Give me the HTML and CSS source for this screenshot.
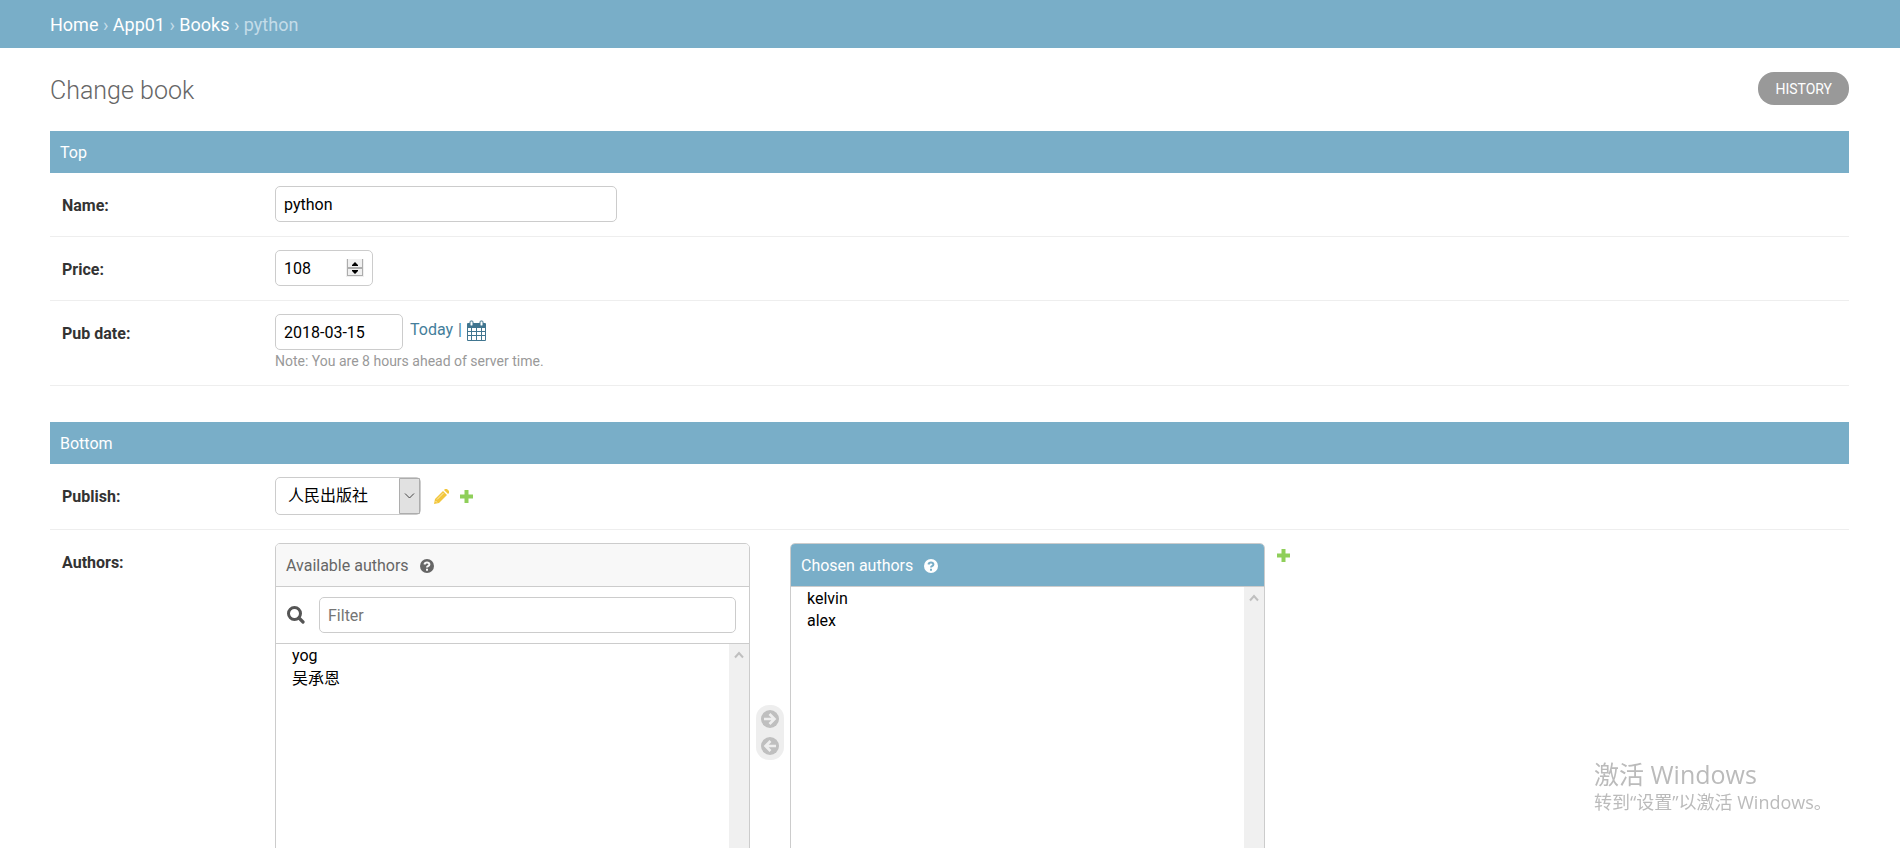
FILE: index.html
```html
<!DOCTYPE html>
<html lang="en">
<head>
<meta charset="utf-8">
<title>Change book</title>
<link rel="stylesheet" href="styles.css">
</head>
<body>
<nav class="breadcrumbs" aria-label="Breadcrumbs">
  <a href="#">Home</a> › <a href="#">App01</a> › <a href="#">Books</a> › python
</nav>
<main class="content">
  <div class="title-row">
    <h1 class="title">Change book</h1>
    <a class="history" href="#">HISTORY</a>
  </div>
  <form>
    <section class="module">
      <h2 class="module-title">Top</h2>
      <div class="row">
        <label class="row-label" for="name">Name:</label>
        <input class="field field-name" id="name" type="text" value="python">
      </div>
      <div class="row">
        <label class="row-label" for="price">Price:</label>
        <div class="number-wrap">
          <input class="field field-price" id="price" type="number" value="108">
          <svg class="spinner" viewBox="0 0 18 18" aria-hidden="true">
            <path fill="#f0f0f0" d="M0 0h18v18H0z"/>
            <path fill="#adadad" d="M1 0h1v17H1zM16 0h1v17h-1zM1 8h16v2H1zM1 16h16v1H1z"/>
            <path d="M9 3l3 3v1H6V6zM6 11h6v1l-3 3-3-3z"/>
          </svg>
        </div>
      </div>
      <div class="row">
        <label class="row-label" for="pub-date">Pub date:</label>
        <div>
          <div class="date-line">
            <input class="field field-date" id="pub-date" type="text" value="2018-03-15">
            <span class="shortcuts"><a href="#">Today</a><span>|</span>
              <a href="#" class="icon-link" aria-label="Choose a date">
                <svg class="calendar" viewBox="0 0 19 21" aria-hidden="true">
                  <path fill="#417690" d="M1 3h17q1 0 1 1v16q0 1-1 1H1q-1 0-1-1V4q0-1 1-1z"/>
                  <rect x="3" y="1" width="3" height="5" rx="1" fill="#fff" stroke="#417690"/>
                  <rect x="13" y="1" width="3" height="5" rx="1" fill="#fff" stroke="#417690"/>
                  <path fill="#fff" d="M1 8h3v3H1zM5 8h4v3H5zM10 8h4v3h-4zM15 8h3v3h-3zM1 12h3v3H1zM5 12h4v3H5zM10 12h4v3h-4zM15 12h3v3h-3zM1 16h3v4H1zM5 16h4v4H5zM10 16h4v4h-4zM15 16h3v4h-3z"/>
                </svg>
              </a>
            </span>
          </div>
          <div class="note">Note: You are 8 hours ahead of server time.</div>
        </div>
      </div>
    </section>
    <section class="module">
      <h2 class="module-title">Bottom</h2>
      <div class="row">
        <label class="row-label" for="publish">Publish:</label>
        <div class="publish-line">
          <div class="select-wrap">
            <select class="field field-select" id="publish"><option>人民出版社</option></select>
            <svg class="select-arrow" viewBox="0 0 21 36" aria-hidden="true">
              <path fill="#e1e1e1" stroke="#adadad" d="M.5.5h20v35H.5z"/>
              <path fill="none" stroke="#444" d="M6 15.500l4.500 4.500 4.500-4.500"/>
            </svg>
          </div>
          <a href="#" class="icon-link" aria-label="Change publish">
            <svg class="pencil" viewBox="0 0 15 15" aria-hidden="true">
              <path fill="#efb80b" fill-opacity=".8" d="M0 15l1-5 8-8 4 4-8 8zM10 1l1-1h2l2 2v2l-1 1z"/>
              <path stroke="#fff" stroke-opacity=".8" stroke-width=".8" fill="none" d="M3 10.500l6.500-6.500M1.500 12l1.500 1.500"/>
            </svg>
          </a>
          <a href="#" class="icon-link" aria-label="Add publish">
            <svg class="plus" viewBox="0 0 13 13" aria-hidden="true"><path fill="#8fcf5a" d="M4.500 0h4v4.500H13v4H8.500V13h-4V8.500H0v-4h4.500z"/></svg>
          </a>
        </div>
      </div>
      <div class="row row-authors">
        <label class="row-label" for="available">Authors:</label>
        <div class="selector">
          <div class="list-box">
            <h3 class="list-title">Available authors
              <svg class="help" viewBox="0 0 14 14" aria-hidden="true"><circle cx="7" cy="7" r="7" fill="#666"/><path fill="none" stroke="#f8f8f8" stroke-width="2" d="M4.500 5.500Q4.800 3.500 7 3.500T9.400 5.400Q9.400 6.400 8 7.100 7 7.700 7 8.600M7 9.700v2"/></svg>
            </h3>
            <div class="filter">
              <svg class="search" viewBox="0 0 18 18" aria-hidden="true"><circle cx="7.500" cy="7.500" r="6" fill="none" stroke="#555" stroke-width="3"/><path stroke="#555" stroke-width="3.200" stroke-linecap="round" d="M12 12l4 4"/></svg>
              <input class="field field-filter" type="text" placeholder="Filter" aria-label="Filter">
            </div>
            <div class="list-area">
              <select class="list" id="available" multiple><option>yog</option><option>吴承恩</option></select>
              <div class="scrollbar"><svg class="chevron" viewBox="0 0 10 8" aria-hidden="true"><path fill="none" stroke="#bfbfbf" stroke-width="2" d="M1 6.500l4-4.500 4 4.500"/></svg></div>
            </div>
          </div>
          <div class="chooser">
            <button type="button" class="choose" aria-label="Choose">
              <svg viewBox="0 0 18 18" aria-hidden="true"><circle cx="9" cy="9" r="9" fill="#bfbfbf"/><path fill="none" stroke="#eee" stroke-width="2.600" d="M3 9h10M8.500 4l5 5-5 5"/></svg>
            </button>
            <button type="button" class="choose" aria-label="Remove">
              <svg viewBox="0 0 18 18" aria-hidden="true"><circle cx="9" cy="9" r="9" fill="#bfbfbf"/><path fill="none" stroke="#eee" stroke-width="2.600" d="M15 9H5M9.500 4l-5 5 5 5"/></svg>
            </button>
          </div>
          <div class="list-box">
            <h3 class="list-title list-title-chosen">Chosen authors
              <svg class="help" viewBox="0 0 14 14" aria-hidden="true"><circle cx="7" cy="7" r="7" fill="#fff"/><path fill="none" stroke="#79aec8" stroke-width="2" d="M4.500 5.500Q4.800 3.500 7 3.500T9.400 5.400Q9.400 6.400 8 7.100 7 7.700 7 8.600M7 9.700v2"/></svg>
            </h3>
            <div class="list-area">
              <select class="list" multiple aria-label="Chosen authors"><option>kelvin</option><option>alex</option></select>
              <div class="scrollbar"><svg class="chevron" viewBox="0 0 10 8" aria-hidden="true"><path fill="none" stroke="#bfbfbf" stroke-width="2" d="M1 6.500l4-4.500 4 4.500"/></svg></div>
            </div>
          </div>
          <a href="#" class="icon-link add-author" aria-label="Add author">
            <svg class="plus" viewBox="0 0 13 13" aria-hidden="true"><path fill="#8fcf5a" d="M4.500 0h4v4.500H13v4H8.500V13h-4V8.500H0v-4h4.500z"/></svg>
          </a>
        </div>
      </div>
    </section>
  </form>
</main>
<aside class="watermark" lang="zh-CN">
  <div class="watermark-title">激活 Windows</div>
  <div class="watermark-text">转到“设置”以激活 Windows。</div>
</aside>
</body>
</html>
```
FILE: styles.css
```css
* { box-sizing: border-box; }
body {
  margin: 0;
  height: 100vh;
  overflow: hidden;
  background: #fff;
  color: #333;
  font: 16px/20px Roboto, "Noto Sans CJK SC", sans-serif;
}
a { color: #447e9b; text-decoration: none; }
svg { display: block; }

.breadcrumbs {
  height: 48px;
  padding: 0 50px;
  background: #79aec8;
  color: #c4dce8;
  font-size: 18px;
  line-height: 49px;
}
.breadcrumbs a { color: #fff; }

.content { padding: 24px 51px 0 50px; }
.title-row {
  display: flex;
  justify-content: space-between;
  align-items: flex-start;
  height: 59px;
}
.title { margin: 0; color: #666; font-size: 25px; font-weight: 300; line-height: 38px; }
.history {
  height: 33px;
  padding: 0 17px;
  border-radius: 16px;
  background: #999;
  color: #fff;
  font-size: 14px;
  line-height: 34px;
}

.module { margin-bottom: 36px; }
.module-title {
  margin: 0;
  padding: 2px 10px 0;
  background: #79aec8;
  color: #fff;
  font-size: 16px;
  font-weight: 400;
  line-height: 40px;
}
.row {
  display: flex;
  align-items: flex-start;
  padding: 13px 12px 14px;
  border-bottom: 1px solid #eee;
}
.row-label { width: 213px; padding-top: 10px; font-weight: 700; }

.field {
  display: block;
  height: 36px;
  margin: 0;
  padding: 0 8px;
  border: 1px solid #ccc;
  border-radius: 5px;
  background: #fff;
  color: #000;
  font: inherit;
}
.field::placeholder { color: #757575; }
.field-name { width: 342px; }
.field-price { width: 98px; appearance: textfield; }
.field-price::-webkit-inner-spin-button { display: none; }
.field-date { width: 128px; }
.number-wrap, .select-wrap { position: relative; }
.spinner { position: absolute; top: 9px; right: 9px; width: 18px; height: 18px; }

.date-line { display: flex; gap: 7px; }
.shortcuts { display: flex; gap: 5px; height: 32px; align-items: center; color: #447e9b; }
.calendar { width: 19px; height: 21px; }
.note { padding-top: 2px; padding-bottom: 1px; color: #999; font-size: 14px; line-height: 18px; }

.publish-line { display: flex; align-items: center; }
.field-select { width: 146px; height: 38px; padding: 0 12px; appearance: none; }
.select-arrow { position: absolute; top: 1px; right: 1px; width: 21px; height: 36px; }
.pencil { width: 15px; height: 15px; margin: 0 11px 0 13px; }
.plus { width: 13px; height: 13px; }

.row-authors { border-bottom: 0; }
.selector { display: flex; }
.list-box {
  width: 475px;
  height: 420px;
  display: flex;
  flex-direction: column;
  overflow: hidden;
  border: 1px solid #ccc;
  border-radius: 5px;
}
.list-title {
  display: flex;
  align-items: center;
  gap: 11px;
  height: 43px;
  margin: 0;
  padding: 1px 10px 0;
  border-bottom: 1px solid #ccc;
  background: #f8f8f8;
  color: #666;
  font-size: 16px;
  font-weight: 400;
}
.list-title-chosen { background: #79aec8; color: #fff; }
.help { width: 14px; height: 14px; }
.filter {
  display: flex;
  align-items: center;
  gap: 14px;
  height: 57px;
  padding: 0 13px 0 11px;
  border-bottom: 1px solid #ccc;
}
.search { width: 18px; height: 18px; }
.field-filter { flex: 1; }
.list-area { flex: 1; display: flex; min-height: 0; }
.list {
  flex: 1;
  margin: 0;
  padding: 0;
  border: 0;
  overflow: hidden;
  outline: 0;
  background: #fff;
  color: #000;
  font: inherit;
}
.list option { display: flex; align-items: center; height: 22px; padding: 0 16px; line-height: 22px; }
.scrollbar { width: 20px; padding: 7px 5px; background: #f0f0f0; }
.chevron { width: 10px; height: 8px; }

.chooser {
  align-self: flex-start;
  display: flex;
  flex-direction: column;
  gap: 9px;
  width: 28px;
  margin: 162px 6px 0;
  padding: 5px;
  border-radius: 13px;
  background: #eee;
}
.choose { width: 18px; height: 18px; padding: 0; border: 0; background: none; }
.add-author { padding: 6px 0 0 12px; }

.watermark {
  position: fixed;
  right: 70px;
  bottom: 34px;
  width: 236px;
  color: #bbb;
  font-family: "Open Sans", "Noto Sans CJK SC", sans-serif;
  white-space: nowrap;
}
.watermark-title { font-size: 25px; line-height: 32px; }
.watermark-text { font-size: 18px; line-height: 24px; }
```
